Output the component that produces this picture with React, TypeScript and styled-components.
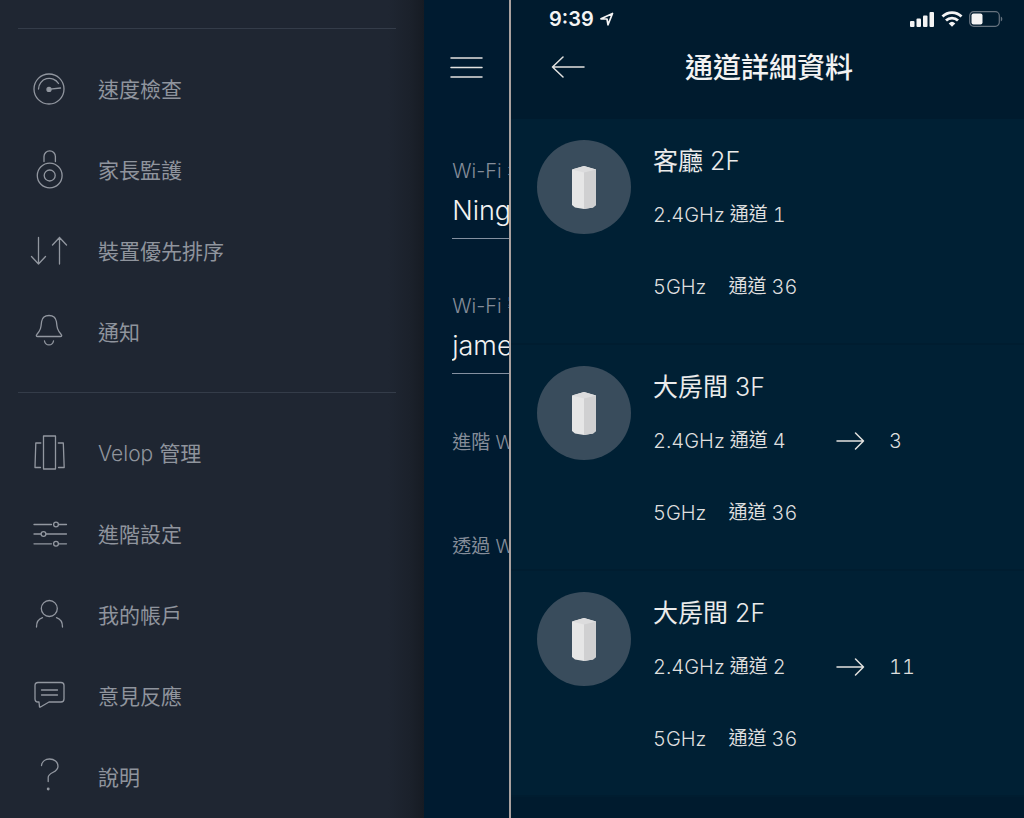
import React from "react";
import styled, { createGlobalStyle } from "styled-components";

const GlobalStyle = createGlobalStyle`
  *, *::before, *::after { box-sizing: border-box; }
  body {
    margin: 0;
    background: #001b2e;
    font-family: Inter, "Noto Sans CJK TC", sans-serif;
    font-weight: 300;
  }
  ul { list-style: none; margin: 0; padding: 0; }
  h1, h2, p { margin: 0; }
`;

const Screens = styled.div`
  display: grid;
  grid-template-columns: 509fr 515fr;
  min-height: 100vh;
`;

const MenuScreen = styled.section`
  display: grid;
  grid-template-columns: 5fr 1fr;
  min-width: 0;
  overflow: hidden;
`;

const Drawer = styled.nav`
  padding-top: 28px;
  background: linear-gradient(to left, #161b23 0, #1b212b 14px, #1f2632 36px);
`;

const MenuGroup = styled.ul`
  display: grid;
  gap: 1px;
  margin: 0 28px 0 18px;
  padding: 21px 0 19px;
  border-top: 1px solid #343c49;

  &:last-child { padding-bottom: 0; }
`;

const MenuLink = styled.a`
  display: flex;
  align-items: center;
  gap: 30px;
  height: 80px;
  padding-left: 12px;
  color: #8f949d;
  font-size: 21px;
  line-height: 30px;
  white-space: nowrap;
  text-decoration: none;
`;

const MenuIcon = styled.svg`
  flex: none;
  width: 38px;
  height: 38px;
  fill: none;
  stroke: #9297a0;
  stroke-width: 1.3;
  stroke-linecap: round;
  stroke-linejoin: round;
`;

const Han = styled.span`
  font-weight: 400;
`;

const SettingsPage = styled.div`
  min-width: 0;
  overflow: hidden;
  padding: 54px 0 0 26px;
  background: #001b30;
  white-space: nowrap;
`;

const IconButton = styled.button`
  display: flex;
  padding: 0;
  border: 0;
  background: none;
  cursor: pointer;
`;

const LineIcon = styled.svg`
  fill: none;
  stroke: #e3e2e0;
  stroke-width: 1.5;
  stroke-linecap: round;
  stroke-linejoin: round;
`;

const Field = styled.div`
  height: 83px;
  margin: 74px 0 0 2px;

  & + & { margin-top: 52px; }
`;

const FieldLabel = styled.label`
  display: block;
  height: 30px;
  color: #858d99;
  font-size: 20px;
  line-height: 30px;
`;

const FieldInput = styled.input`
  display: block;
  width: 240px;
  height: 53px;
  padding: 0 0 4px;
  border: 0;
  border-bottom: 1px solid #8490a0;
  outline: 0;
  background: none;
  color: #f2f2f2;
  font: inherit;
  font-size: 27px;
`;

const SettingLink = styled.a`
  display: block;
  margin: 54px 0 74px 2px;
  color: #858d99;
  font-size: 19px;
  line-height: 30px;
  text-decoration: none;

  & + & { margin-top: 0; }
`;

const ChannelScreen = styled.main`
  min-width: 0;
  border-left: 2px solid #a9a19f;
  background: #001b2e;
`;

const StatusBar = styled.div`
  display: flex;
  align-items: center;
  justify-content: space-between;
  height: 38px;
  padding: 0 21px 0 38px;
`;

const StatusGroup = styled.div`
  display: flex;
  align-items: center;
  gap: 6px;
`;

const Time = styled.time`
  color: #f4f4f4;
  font-size: 20px;
  font-weight: 600;
  line-height: 24px;
`;

const TitleBar = styled.header`
  display: grid;
  grid-template-columns: 34px 1fr 34px;
  align-items: center;
  height: 81px;
  padding: 0 37px 22px 40px;
`;

const Title = styled.h1`
  color: #f2f2f2;
  font-size: 28px;
  font-weight: 500;
  line-height: 40px;
  text-align: center;
`;

const NodeItem = styled.li`
  display: flex;
  gap: 22px;
  height: 226px;
  padding: 21px 26px 0;
  border-bottom: 2px solid #001d30;
  background: #002034;
`;

const NodePicture = styled.svg`
  flex: none;
  width: 94px;
  height: 94px;
`;

const NodeName = styled.h2`
  color: #ebebeb;
  font-size: 25px;
  font-weight: 300;
  line-height: 42px;
`;

const Band = styled.p<{ $spaced?: boolean }>`
  display: flex;
  align-items: center;
  height: 30px;
  margin-top: ${(p) => (p.$spaced ? 42 : 18)}px;
  color: #dedede;
  font-size: 20px;
  font-variant-numeric: tabular-nums;
  line-height: 30px;
  white-space: nowrap;
`;

const BandName = styled.span<{ $wide?: boolean }>`
  margin-right: ${(p) => (p.$wide ? 22 : 5)}px;
`;

const ChannelWord = styled.span`
  margin-right: 5px;
  font-size: 19px;
  font-weight: 400;
`;

const BandNow = styled.span`
  display: flex;
  width: 183px;
`;

const BandNext = styled.span`
  margin-left: 24px;
`;

const menuGroups = [
  [
    {
      label: "速度檢查",
      icon: (
        <>
          <circle cx="19" cy="18" r="15" />
          <path d="M8.5 18a10.8 10.8 0 0 1 20-5.5M20 18.2l10.5-1.2" />
          <circle cx="19" cy="18.4" r="2" fill="#9297a0" />
        </>
      ),
    },
    {
      label: "家長監護",
      icon: (
        <>
          <circle cx="19.7" cy="23.5" r="12.4" />
          <circle cx="19.7" cy="23.5" r="5.5" />
          <path d="M14 9.500V4.500a5.700 5.700 0 0 1 11.400 0v5" />
        </>
      ),
    },
    {
      label: "裝置優先排序",
      icon: <path d="M8.500 4.500v26.500M1.500 23.500l7 7.500 7-7.500M29.500 31V4.500M22.500 12l7-7.500 7 7.500" />,
    },
    {
      label: "通知",
      icon: (
        <path d="M7.500 22.500c-1.300 0-1.500-1.200-.700-2 4-4.500 4.200-7 4.800-13C12.200 4 15 1.500 19 1.500S25.800 4 26.400 7.500c.6 6 .8 8.500 4.800 13 .8.8.6 2-.7 2zM14.500 27a4.600 5 0 0 0 9 0" />
      ),
    },
  ],
  [
    {
      latin: "Velop ",
      label: "管理",
      icon: (
        <path d="M13.500 1h12v33h-12zM10.800 8H5.800L5 32.500h5.500M28.300 8h5L34.200 32.500h-5.700" />
      ),
    },
    {
      label: "進階設定",
      icon: (
        <>
          <path d="M4 8.500h17.500M28.500 8.500H36.500M4 18h7M16 18H36.500M4 27.800h17.500M28.500 27.800H36.500" />
          <circle cx="26" cy="8.500" r="2.400" />
          <circle cx="13.500" cy="18" r="2.400" />
          <circle cx="26" cy="27.800" r="2.400" />
        </>
      ),
    },
    {
      label: "我的帳戶",
      icon: (
        <>
          <circle cx="19.300" cy="11.500" r="8" />
          <path d="M6.500 30c0-5 2-8 6-9.300M32.500 30c0-5-2-8-6-9.300" />
        </>
      ),
    },
    {
      label: "意見反應",
      icon: (
        <path d="M8 4.500h23a3 3 0 0 1 3 3v13.500a3 3 0 0 1-3 3H19l-8.500 5H9.500L9 24H8a3 3 0 0 1-3-3V7.500a3 3 0 0 1 3-3zM11.500 12h16M11.500 17h16" />
      ),
    },
    {
      label: "說明",
      icon: (
        <>
          <path d="M11.500 6.500c.5-4.200 4-6.500 8-6.500 4.800 0 8.500 3 8.500 7.200 0 6.800-9.800 5.800-9.800 11.300v4" />
          <circle cx="18.200" cy="30" r=".8" fill="#9297a0" />
        </>
      ),
    },
  ],
];

const nodes = [
  { room: "客廳", floor: "2F", low: "1", high: "36" },
  { room: "大房間", floor: "3F", low: "4", next: "3", high: "36" },
  { room: "大房間", floor: "2F", low: "2", next: "11", high: "36" },
];

function Speaker() {
  return (
    <NodePicture viewBox="0 0 94 94" aria-hidden="true">
      <circle cx="47" cy="47" r="47" fill="#394c5c" />
      <path d="M35 29.500l12-3.500 12 3.500V65l-3 2.500-9 1.500-9-1.500L35 65z" fill="#e6e6e6" />
      <path d="M47 31.500l12-2V65l-3 2.500-9 1.500z" fill="#d0d0d1" />
      <path d="M35 29.500l12-3.500 12 3.500-12 3z" fill="#dcdcdd" />
    </NodePicture>
  );
}

export default function App() {
  return (
    <>
      <GlobalStyle />
      <Screens>
        <MenuScreen>
          <Drawer>
            {menuGroups.map((group, i) => (
              <MenuGroup key={i}>
                {group.map((item) => (
                  <li key={item.label}>
                    <MenuLink href="#">
                      <MenuIcon viewBox="0 0 38 38" overflow="visible" aria-hidden="true">
                        {item.icon}
                      </MenuIcon>
                      <span>
                        {"latin" in item && item.latin}
                        <Han>{item.label}</Han>
                      </span>
                    </MenuLink>
                  </li>
                ))}
              </MenuGroup>
            ))}
          </Drawer>
          <SettingsPage>
            <IconButton aria-label="選單">
              <LineIcon width="34" height="28" viewBox="0 0 34 28">
                <path d="M1 4h31M1 13.500h31M1 23h31" />
              </LineIcon>
            </IconButton>
            <Field>
              <FieldLabel htmlFor="wifi-name">Wi-Fi 名稱</FieldLabel>
              <FieldInput id="wifi-name" defaultValue="Ning" />
            </Field>
            <Field>
              <FieldLabel htmlFor="wifi-password">Wi-Fi 密碼</FieldLabel>
              <FieldInput id="wifi-password" defaultValue="james" />
            </Field>
            <SettingLink href="#"><Han>進階</Han> Wi-Fi</SettingLink>
            <SettingLink href="#"><Han>透過</Han> Wi-Fi</SettingLink>
          </SettingsPage>
        </MenuScreen>
        <ChannelScreen>
          <StatusBar>
            <StatusGroup>
              <Time>9:39</Time>
              <svg width="14" height="14" viewBox="0 0 14 14" aria-hidden="true">
                <path d="M1 6.800L12.500 1.500 8 12.800 7 7z" fill="none" stroke="#f4f4f4" strokeWidth="1.700" strokeLinejoin="round" />
              </svg>
            </StatusGroup>
            <StatusGroup>
              <svg width="25" height="16" viewBox="0 0 25 16" fill="#f4f4f4" aria-hidden="true">
                <rect x="0" y="10" width="4.500" height="6" rx="1" />
                <rect x="6.500" y="7.500" width="4.500" height="8.500" rx="1" />
                <rect x="13" y="4.500" width="4.500" height="11.500" rx="1" />
                <rect x="19.500" y="1" width="4.500" height="15" rx="1" />
              </svg>
              <svg width="22" height="16" viewBox="0 0 22 16" fill="none" stroke="#f4f4f4" strokeWidth="2.800" aria-hidden="true">
                <path d="M1.500 5.600a13.500 13.500 0 0 1 19 0M5 9.600a8.500 8.500 0 0 1 12 0" />
                <path d="M11 15.800l-3.300-3.400a4.800 4.800 0 0 1 6.600 0z" fill="#f4f4f4" stroke="none" />
              </svg>
              <svg width="34" height="16" viewBox="0 0 34 16" aria-hidden="true">
                <rect x=".7" y=".7" width="29.600" height="14.600" rx="4" fill="none" stroke="#66737f" strokeWidth="1.200" />
                <rect x="2.500" y="2.500" width="11" height="11" rx="2" fill="#f4f4f4" />
                <path d="M31.800 5.500c2 .8 2 4.200 0 5z" fill="#66737f" />
              </svg>
            </StatusGroup>
          </StatusBar>
          <TitleBar>
            <IconButton aria-label="返回">
              <LineIcon width="34" height="24" viewBox="0 0 34 24">
                <path d="M33 11H1.500M12 1L1.500 11 12 21" />
              </LineIcon>
            </IconButton>
            <Title>通道詳細資料</Title>
          </TitleBar>
          <ul>
            {nodes.map((node) => (
              <NodeItem key={node.room + node.floor}>
                <Speaker />
                <div>
                  <NodeName>
                    <Han>{node.room}</Han> {node.floor}
                  </NodeName>
                  <Band>
                    <BandNow>
                      <BandName>2.4GHz</BandName>
                      <ChannelWord>通道</ChannelWord>
                      {node.low}
                    </BandNow>
                    {node.next && (
                      <>
                        <LineIcon width="29" height="20" viewBox="0 0 29 20" role="img" aria-label="變更為">
                          <path d="M1 10h26.500M19.500 2l8 8-8 8" />
                        </LineIcon>
                        <BandNext>{node.next}</BandNext>
                      </>
                    )}
                  </Band>
                  <Band $spaced>
                    <BandName $wide>5GHz</BandName>
                    <ChannelWord>通道</ChannelWord>
                    {node.high}
                  </Band>
                </div>
              </NodeItem>
            ))}
          </ul>
        </ChannelScreen>
      </Screens>
    </>
  );
}
